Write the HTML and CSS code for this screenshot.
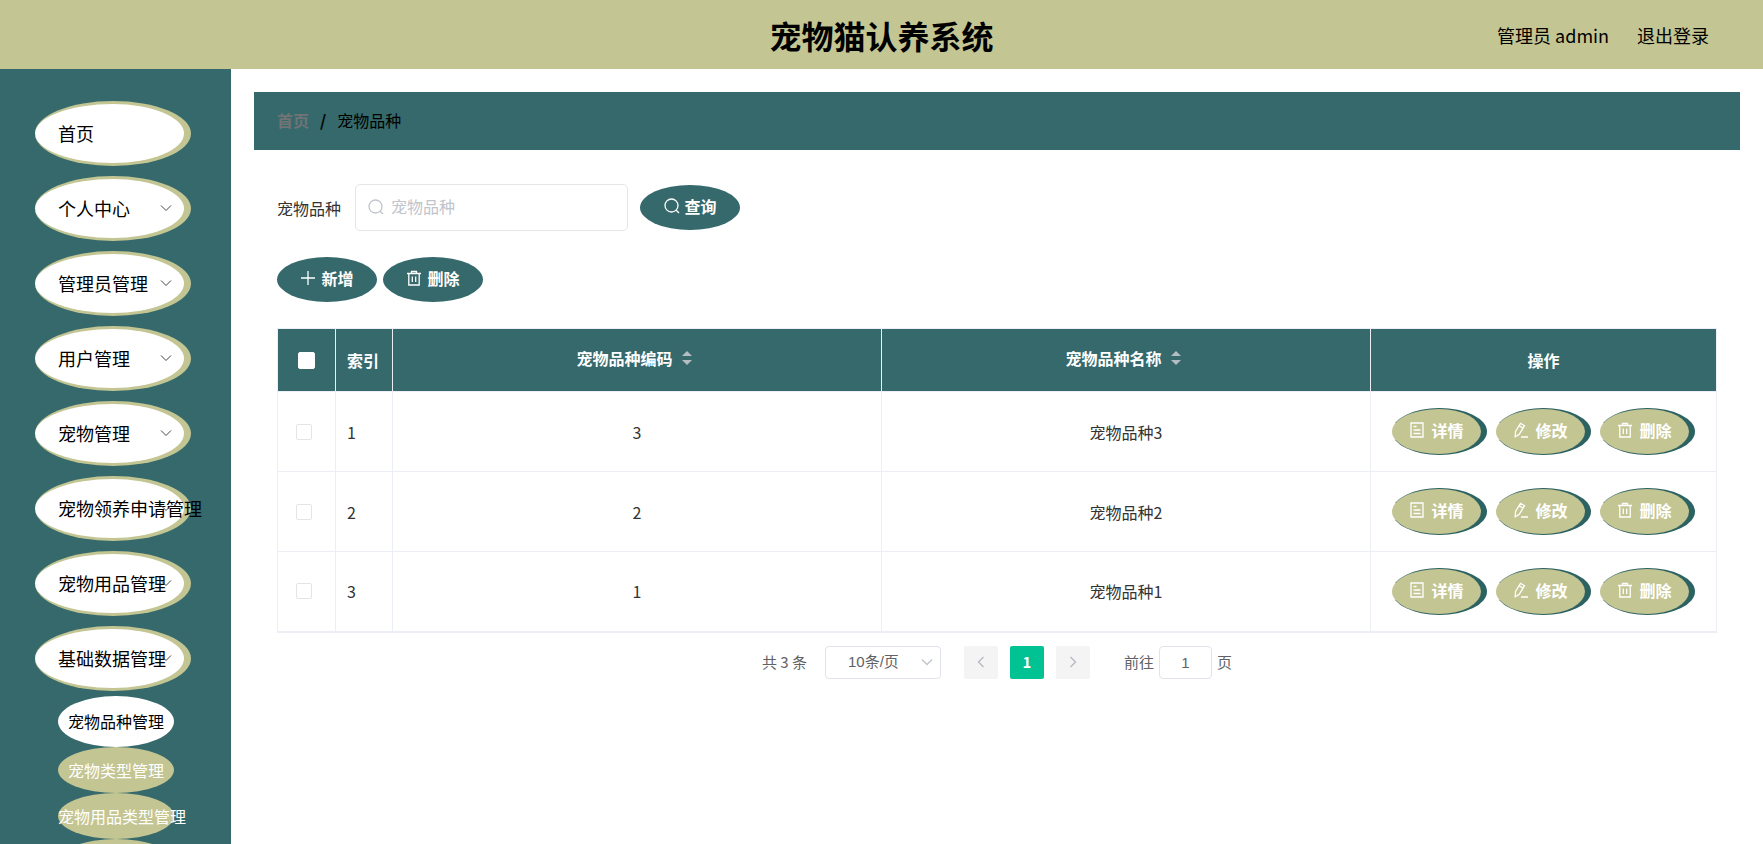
FILE: index.html
```html
<!DOCTYPE html>
<html lang="zh-CN">
<head>
  <meta charset="UTF-8">
  <meta name="viewport" content="width=device-width, initial-scale=1.0">
  <title>宠物猫认养系统</title>
  <link rel="stylesheet" href="styles.css">
</head>
<body>
  <!-- icons -->
  <svg class="sprite" aria-hidden="true">
    <symbol id="i-down" viewBox="0 0 16 16"><path d="M3 5.500l5 5 5-5"/></symbol>
    <symbol id="i-left" viewBox="0 0 16 16"><path d="M10.500 3l-5 5 5 5"/></symbol>
    <symbol id="i-right" viewBox="0 0 16 16"><path d="M5.500 3l5 5-5 5"/></symbol>
    <symbol id="i-search" viewBox="0 0 16 16"><circle cx="7.500" cy="7.500" r="6.500"/><path d="M12.200 12.200l2.800 2.800"/></symbol>
    <symbol id="i-plus" viewBox="0 0 16 16"><path d="M8 1v14M1 8h14"/></symbol>
    <symbol id="i-delete" viewBox="0 0 16 16"><path d="M1 3.500h14M5.500 3.500v-2h5v2M2.800 3.500v11.500h10.400v-11.500M6.300 6.500v5.500M9.700 6.500v5.500"/></symbol>
    <symbol id="i-doc" viewBox="0 0 16 16"><path d="M2 1h12v14h-12zM4.500 4.500h3M4.500 8h7M4.500 11.500h7"/></symbol>
    <symbol id="i-edit" viewBox="0 0 16 16"><path d="M2.500 9.500L7.500 1.300l4 2.400-5.200 8.600L2.200 14.800zM6.200 3.800l3.800 2.300M8 15h7"/></symbol>
  </svg>

  <header class="header">
    <h1 class="title">宠物猫认养系统</h1>
    <div class="user">
      <span>管理员 admin</span>
      <a href="#">退出登录</a>
    </div>
  </header>

  <div class="layout">
    <nav class="sidebar">
      <ul class="menu">
        <li><button class="menu-item">首页</button></li>
        <li><button class="menu-item">个人中心<svg class="arrow"><use href="#i-down"/></svg></button></li>
        <li><button class="menu-item">管理员管理<svg class="arrow"><use href="#i-down"/></svg></button></li>
        <li><button class="menu-item">用户管理<svg class="arrow"><use href="#i-down"/></svg></button></li>
        <li><button class="menu-item">宠物管理<svg class="arrow"><use href="#i-down"/></svg></button></li>
        <li><button class="menu-item">宠物领养申请管理<svg class="arrow"><use href="#i-down"/></svg></button></li>
        <li><button class="menu-item">宠物用品管理<svg class="arrow"><use href="#i-down"/></svg></button></li>
        <li><button class="menu-item">基础数据管理<svg class="arrow"><use href="#i-down"/></svg></button></li>
      </ul>
      <ul class="submenu">
        <li><a class="active" href="#">宠物品种管理</a></li>
        <li><a href="#">宠物类型管理</a></li>
        <li><a href="#">宠物用品类型管理</a></li>
        <li><a href="#"></a></li>
      </ul>
    </nav>

    <main class="main">
      <div class="breadcrumb">
        <a href="#">首页</a>
        <b>/</b>
        <span>宠物品种</span>
      </div>

      <div class="content">
        <form class="search">
          <label for="breed">宠物品种</label>
          <div class="search-box">
            <svg class="icon"><use href="#i-search"/></svg>
            <input id="breed" type="text" placeholder="宠物品种">
          </div>
          <button class="btn" type="button"><svg class="icon"><use href="#i-search"/></svg>查询</button>
        </form>

        <div class="actions">
          <button class="btn"><svg class="icon"><use href="#i-plus"/></svg>新增</button>
          <button class="btn"><svg class="icon"><use href="#i-delete"/></svg>删除</button>
        </div>

        <table class="table">
          <colgroup>
            <col class="col-check">
            <col class="col-index">
            <col>
            <col>
            <col class="col-ops">
          </colgroup>
          <thead>
            <tr>
              <th><input type="checkbox" aria-label="全选"></th>
              <th class="left">索引</th>
              <th><span class="sort">宠物品种编码<i></i></span></th>
              <th><span class="sort">宠物品种名称<i></i></span></th>
              <th>操作</th>
            </tr>
          </thead>
          <tbody>
            <tr>
              <td><input type="checkbox" aria-label="选择 1"></td>
              <td class="left">1</td>
              <td>3</td>
              <td>宠物品种3</td>
              <td>
                <div class="ops">
                  <button class="op"><svg class="icon"><use href="#i-doc"/></svg>详情</button>
                  <button class="op"><svg class="icon"><use href="#i-edit"/></svg>修改</button>
                  <button class="op"><svg class="icon"><use href="#i-delete"/></svg>删除</button>
                </div>
              </td>
            </tr>
            <tr>
              <td><input type="checkbox" aria-label="选择 2"></td>
              <td class="left">2</td>
              <td>2</td>
              <td>宠物品种2</td>
              <td>
                <div class="ops">
                  <button class="op"><svg class="icon"><use href="#i-doc"/></svg>详情</button>
                  <button class="op"><svg class="icon"><use href="#i-edit"/></svg>修改</button>
                  <button class="op"><svg class="icon"><use href="#i-delete"/></svg>删除</button>
                </div>
              </td>
            </tr>
            <tr>
              <td><input type="checkbox" aria-label="选择 3"></td>
              <td class="left">3</td>
              <td>1</td>
              <td>宠物品种1</td>
              <td>
                <div class="ops">
                  <button class="op"><svg class="icon"><use href="#i-doc"/></svg>详情</button>
                  <button class="op"><svg class="icon"><use href="#i-edit"/></svg>修改</button>
                  <button class="op"><svg class="icon"><use href="#i-delete"/></svg>删除</button>
                </div>
              </td>
            </tr>
          </tbody>
        </table>

        <div class="pagination">
          <span>共 3 条</span>
          <div class="page-size">
            <select aria-label="每页条数">
              <option>10条/页</option>
            </select>
            <svg class="icon"><use href="#i-down"/></svg>
          </div>
          <div class="pager">
            <button aria-label="上一页" disabled><svg class="icon"><use href="#i-left"/></svg></button>
            <button class="current">1</button>
            <button aria-label="下一页" disabled><svg class="icon"><use href="#i-right"/></svg></button>
          </div>
          <div class="jump">
            <label for="page">前往</label>
            <input id="page" type="text" value="1">
            <span>页</span>
          </div>
        </div>
      </div>
    </main>
  </div>
</body>
</html>
```

FILE: styles.css
```css
* {
  box-sizing: border-box;
}

body {
  margin: 0;
  height: 100vh;
  display: flex;
  flex-direction: column;
  overflow: hidden;
  background: #fff;
  color: #333;
  font-family: "Noto Sans CJK SC", sans-serif;
  font-size: 16px;
  line-height: 24px;
}

button, input, select {
  font: inherit;
  color: inherit;
  margin: 0;
}

button {
  cursor: pointer;
}

a {
  color: inherit;
  text-decoration: none;
}

ul {
  list-style: none;
  margin: 0;
  padding: 0;
}

svg {
  fill: none;
  stroke: currentColor;
}

.sprite {
  display: none;
}

.icon {
  width: 16px;
  height: 16px;
  flex: none;
  stroke-width: 1.3;
}

/* header */
.header {
  display: grid;
  grid-template-columns: 1fr auto 1fr;
  align-items: center;
  height: 69px;
  flex: none;
  padding: 0 54px;
  background: #c3c593;
  color: #000;
}

.title {
  grid-column: 2;
  margin: 0;
  font-size: 32px;
  line-height: 48px;
}

.user {
  display: flex;
  justify-content: flex-end;
  gap: 28px;
  font-size: 18px;
}

.layout {
  flex: 1;
  display: flex;
  min-height: 0;
}

/* sidebar */
.sidebar {
  width: 231px;
  flex: none;
  padding: 32px 40px 0 35px;
  background: #35696c;
  overflow: hidden;
}

.menu {
  display: flex;
  flex-direction: column;
  gap: 10px;
}

.menu-item {
  position: relative;
  display: flex;
  align-items: center;
  width: 100%;
  height: 65px;
  padding: 0 0 2px 23px;
  border: solid #c3c593;
  border-width: 3px 7px 3px 0;
  border-radius: 50%;
  background: #fff;
  color: #000;
  font-size: 18px;
  white-space: nowrap;
}

.arrow {
  position: absolute;
  right: 10px;
  width: 16px;
  height: 16px;
  color: #444;
}

.submenu {
  padding: 5px 17px 0 23px;
}

.submenu a {
  display: flex;
  align-items: center;
  height: 46px;
  padding-bottom: 1px;
  border-radius: 50%;
  background: #c3c593;
  color: #fff;
  white-space: nowrap;
  justify-content: safe center;
}

.submenu .active {
  height: 51px;
  background: #fff;
  color: #000;
}

/* main */
.main {
  flex: 1;
  min-width: 0;
  padding: 23px;
}

.breadcrumb {
  display: flex;
  align-items: center;
  gap: 11px;
  height: 58px;
  padding: 0 23px 2px;
  background: #35696c;
  color: #000;
}

.breadcrumb a {
  color: #707475;
  font-weight: bold;
}

.content {
  padding: 34px 23px 0;
}

.search {
  display: flex;
  align-items: center;
}

.search-box {
  position: relative;
  width: 273px;
  margin: 0 12px 0 14px;
}

.search-box .icon {
  position: absolute;
  left: 13px;
  top: 15px;
  color: #c0c4cc;
}

.search-box input {
  display: block;
  width: 100%;
  height: 47px;
  padding: 0 12px 3px 35px;
  border: 1px solid #e4e6ea;
  border-radius: 5px;
  outline: none;
}

.search-box input::placeholder {
  color: #c0c4cc;
}

.btn {
  display: flex;
  align-items: center;
  justify-content: center;
  gap: 5px;
  width: 100px;
  height: 45px;
  padding: 0 0 3px;
  border: none;
  border-radius: 50%;
  background: #35696c;
  color: #fff;
  font-weight: bold;
}

.actions {
  display: flex;
  gap: 6px;
  margin: 26px 0;
}

/* table */
.table {
  width: 100%;
  table-layout: fixed;
  border-collapse: collapse;
  border: 1px solid #ebeef5;
  border-bottom-width: 2px;
}

.col-check {
  width: 58px;
}

.col-index {
  width: 57px;
}

.col-ops {
  width: 346px;
}

.table th,
.table td {
  padding: 0 11px;
  border: 1px solid #ebeef5;
  text-align: center;
}

.table tr:last-child td {
  border-bottom-width: 2px;
}

.table th {
  height: 63px;
  background: #35696c;
  color: #fff;
}

.table td {
  height: 80px;
}

.table .left {
  text-align: left;
}

.table input {
  appearance: none;
  display: block;
  width: 16px;
  height: 16px;
  margin-left: 7px;
  border: 1px solid #e2e4e8;
  border-radius: 2px;
  background: #fff;
}

.table th input {
  width: 17px;
  height: 17px;
  margin-left: 9px;
  border-color: #fff;
}

.sort {
  display: inline-flex;
  align-items: center;
  gap: 9px;
  padding: 0 6px 4px 0;
}

.sort i {
  display: grid;
  gap: 4px;
}

.sort i::before,
.sort i::after {
  content: "";
  border: 5px solid transparent;
}

.sort i::before {
  border-top: none;
  border-bottom-color: #b4bcc4;
}

.sort i::after {
  border-bottom: none;
  border-top-color: #b4bcc4;
}

.ops {
  display: flex;
  justify-content: center;
  gap: 9px;
}

.op {
  display: flex;
  align-items: center;
  justify-content: center;
  gap: 6px;
  width: 95px;
  height: 47px;
  padding: 0 0 3px;
  border: solid #2d6262;
  border-width: 1px 6px 1px 0;
  border-radius: 50%;
  background: #c3c593;
  color: #fff;
  font-weight: bold;
}

/* pagination */
.pagination {
  display: flex;
  align-items: center;
  justify-content: center;
  padding-top: 13px;
  color: #606266;
  font-size: 15px;
}

.page-size {
  position: relative;
  margin: 0 23px 0 18px;
}

.page-size select {
  appearance: none;
  display: block;
  width: 116px;
  height: 33px;
  padding: 0 22px;
  border: 1px solid #e0e3e9;
  border-radius: 4px;
  background: #fff;
  font-family: "Liberation Sans", "Noto Sans CJK SC", sans-serif;
}

.page-size .icon {
  position: absolute;
  right: 6px;
  top: 8px;
  color: #c0c4cc;
}

.pager {
  display: flex;
  gap: 12px;
}

.pager button {
  display: flex;
  align-items: center;
  justify-content: center;
  width: 34px;
  height: 33px;
  padding: 0;
  border: none;
  border-radius: 2px;
  background: #f4f4f5;
  color: #b4b8c0;
  font-weight: bold;
}

.pager .current {
  background: #00c292;
  color: #fff;
}

.jump {
  display: flex;
  align-items: center;
  gap: 5px;
  margin-left: 34px;
}

.jump input {
  width: 53px;
  height: 33px;
  padding: 0;
  border: 1px solid #e0e3e9;
  border-radius: 4px;
  text-align: center;
  font-family: "Liberation Sans", "Noto Sans CJK SC", sans-serif;
}
```
